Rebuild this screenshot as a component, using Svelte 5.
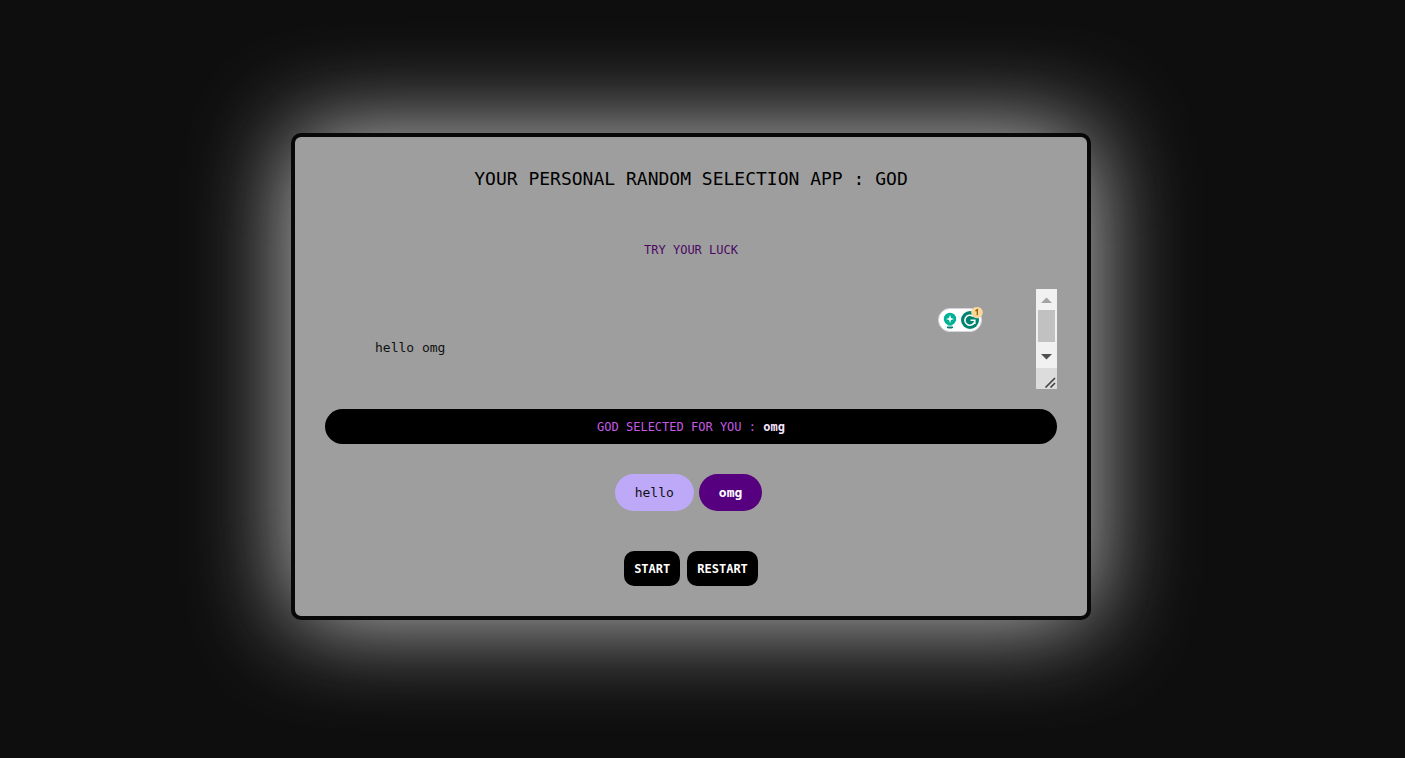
<script>
  let text = $state('hello omg');
  let picked = $state('omg');
  const options = $derived(text.split(/\s+/).filter(Boolean));

  function start() {
    picked = options[Math.floor(Math.random() * options.length)] ?? '';
  }

  function restart() {
    text = '';
    picked = '';
  }
</script>

<main>
  <section class="card">
    <h1>YOUR PERSONAL RANDOM SELECTION APP : GOD</h1>
    <label for="choices">TRY YOUR LUCK</label>

    <div class="field">
      <textarea id="choices" bind:value={text} spellcheck="false"></textarea>
      <svg class="scroll" width="21" height="100" viewBox="0 0 21 100" aria-hidden="true">
        <path fill="#f1f1f1" d="M0 0h21v79H0z" />
        <path fill="#dcdcdc" d="M0 79h21v21H0z" />
        <path fill="#a3a3a3" d="M5 14l5.500-5.500L16 14z" />
        <path fill="#c1c1c1" d="M2 21h17v32H2z" />
        <path fill="#505050" d="M5 65h11l-5.500 5.500z" />
        <path stroke="#444" stroke-width="1.700" d="M9.500 98.500l9.500-9.500M14.500 98.500l4.500-4.500" />
      </svg>
      <svg class="helper" width="46" height="26" viewBox="0 0 46 26" aria-hidden="true">
        <rect x="0.500" y="1.500" width="43" height="23" rx="11.500" fill="#fff" stroke="#d4d4de" />
        <circle cx="12" cy="12" r="6.200" fill="#00b295" />
        <path fill="#00b295" d="M9 16h6l-1 2.500h-4z" />
        <path fill="#00856f" d="M9 19.500h6v1l-1 1h-4l-1-1z" />
        <path fill="#fff" d="M12 8l1.100 2.900 2.900 1.100-2.900 1.100-1.100 2.900-1.100-2.900-2.900-1.100 2.900-1.100z" />
        <circle cx="32" cy="13" r="9" fill="#00846f" />
        <path fill="none" stroke="#fff" stroke-width="1.600" d="M35 9.300a5 5 0 1 0 1.800 4.800M32.500 13.300h4.300v3.800" />
        <circle cx="39" cy="5.500" r="5.500" fill="#ffd792" stroke="#f0dfbd" stroke-width="0.500" />
        <path fill="none" stroke="#80591f" stroke-width="1.200" d="M37.500 4l1.800-1.300v5.500" />
      </svg>
    </div>

    <p class="result">GOD SELECTED FOR YOU : <strong>{picked}</strong></p>

    <div class="tags">
      {#each options as option}
        <span class="tag" class:selected={option === picked}>{option}</span>
      {/each}
    </div>

    <div class="actions">
      <button type="button" onclick={start}>START</button>
      <button type="button" onclick={restart}>RESTART</button>
    </div>
  </section>
</main>

<style>
  :global(body) {
    background: #0e0e0e;
  }

  main {
    box-sizing: border-box;
    min-height: 100vh;
    padding: 0 23px 5px 0;
    display: flex;
    align-items: center;
    justify-content: center;
    overflow: hidden;
    font-family: 'DejaVu Sans Mono', monospace;
    font-size: 12px;
    line-height: 15px;
  }

  .card {
    box-sizing: border-box;
    width: 100%;
    max-width: 800px;
    padding: 31px 30px 30px;
    display: flex;
    flex-direction: column;
    align-items: center;
    background: #9e9e9e;
    border: 4px solid #080808;
    border-radius: 10px;
    box-shadow: 0 0 100px #cccccc;
  }

  h1 {
    margin: 0 0 53px;
    font-size: 18px;
    line-height: 22px;
    font-weight: 400;
    color: #000;
    text-align: center;
  }

  label {
    margin-bottom: 31px;
    color: #4b0863;
  }

  .field {
    position: relative;
    align-self: stretch;
    display: flex;
    margin-bottom: 20px;
  }

  textarea {
    box-sizing: border-box;
    flex: 1;
    min-width: 0;
    height: 100px;
    padding: 51px 50px 0;
    border: 0;
    outline: 0;
    resize: none;
    overflow: hidden;
    background: transparent;
    color: #111;
    font-family: inherit;
    font-size: 13px;
    line-height: 16px;
  }

  .helper {
    position: absolute;
    top: 18px;
    right: 73px;
  }

  .result {
    align-self: stretch;
    margin: 0 0 30px;
    padding: 11px 10px 9px;
    border-radius: 20px;
    background: #000;
    color: #c65ae6;
    text-align: center;
  }

  .result strong {
    color: #f7e3fc;
  }

  .tags {
    display: flex;
    flex-wrap: wrap;
    justify-content: center;
    margin-bottom: 40px;
  }

  .tag {
    margin-right: 5px;
    padding: 10px 20px;
    border-radius: 20px;
    background: #bda9f7;
    color: #111;
    font-size: 13px;
    line-height: 17px;
  }

  .tag.selected {
    background: #57007f;
    color: #fff;
    font-weight: 700;
  }

  .actions {
    display: flex;
    gap: 7px;
  }

  button {
    padding: 11px 10px 9px;
    border: 0;
    border-radius: 10px;
    background: #000;
    color: #fff;
    font-family: inherit;
    font-size: 12px;
    line-height: 15px;
    font-weight: 700;
  }
</style>
